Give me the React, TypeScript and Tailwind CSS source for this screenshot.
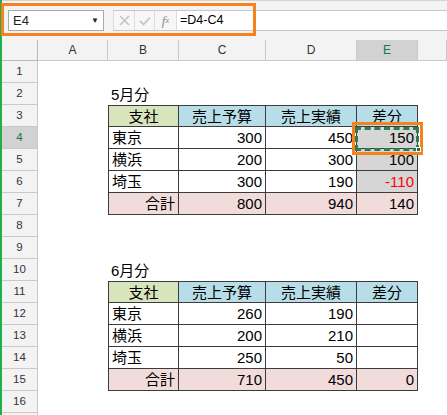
import type { ReactNode } from 'react';

const COLS = 'grid grid-cols-[36px_70px_71px_87px_91px_61px_1fr]';
const LETTERS = ['A', 'B', 'C', 'D', 'E', ''];

type Cell = {
  text?: string;
  align?: 'left' | 'right' | 'center';
  fill?: 'green' | 'blue' | 'pink' | 'sel';
  red?: boolean;
  active?: boolean;
};

const FILL: Record<string, string> = {
  green: 'bg-[#d8e4bc]',
  blue: 'bg-[#b7dee8]',
  pink: 'bg-[#f2dcdb]',
  sel: 'bg-[#d6d6d6]',
};

const head = (): Cell[] => [
  { text: '支社', align: 'center', fill: 'green' },
  { text: '売上予算', align: 'center', fill: 'blue' },
  { text: '売上実績', align: 'center', fill: 'blue' },
  { text: '差分', align: 'center', fill: 'blue' },
];

const r = (t: string): Cell => ({ text: t, align: 'right' });
const p = (t: string): Cell => ({ text: t, align: 'right', fill: 'pink' });

// B..E contents per row; `table` marks bordered rows, `top` the first one
const SHEET: Record<number, { cells: Cell[]; table?: boolean; top?: boolean }> = {
  2: { cells: [{ text: '5月分' }] },
  3: { cells: head(), table: true, top: true },
  4: {
    cells: [{ text: '東京' }, r('300'), r('450'), { text: '150', align: 'right', fill: 'sel', active: true }],
    table: true,
  },
  5: { cells: [{ text: '横浜' }, r('200'), r('300'), { text: '100', align: 'right', fill: 'sel' }], table: true },
  6: { cells: [{ text: '埼玉' }, r('300'), r('190'), { text: '-110', align: 'right', fill: 'sel', red: true }], table: true },
  7: { cells: [p('合計'), p('800'), p('940'), p('140')], table: true },
  10: { cells: [{ text: '6月分' }] },
  11: { cells: head(), table: true, top: true },
  12: { cells: [{ text: '東京' }, r('260'), r('190'), r('')], table: true },
  13: { cells: [{ text: '横浜' }, r('200'), r('210'), r('')], table: true },
  14: { cells: [{ text: '埼玉' }, r('250'), r('50'), r('')], table: true },
  15: { cells: [p('合計'), p('710'), p('450'), p('0')], table: true },
};

function XIcon() {
  return (
    <svg width="11" height="11" viewBox="0 0 11 11" className="text-[#c4c4c4]">
      <path d="M1 1 L10 10 M10 1 L1 10" stroke="currentColor" strokeWidth="1.6" />
    </svg>
  );
}

function CheckIcon() {
  return (
    <svg width="12" height="10" viewBox="0 0 12 10" className="text-[#c4c4c4]">
      <path d="M1 5 L4.5 8.5 L11 1.5" stroke="currentColor" strokeWidth="1.8" fill="none" />
    </svg>
  );
}

function Btn({ children, first }: { children: ReactNode; first?: boolean }) {
  return (
    <div
      className={`flex w-[20px] items-center justify-center ${first ? '' : 'border-l border-[#dcdcdc]'}`}
    >
      {children}
    </div>
  );
}

function FormulaBar() {
  return (
    <div className="flex h-[40px] border-t border-[#d4d4d4] bg-[#f3f3f3] pt-[9px]">
      <div className="flex h-[21px] w-full items-stretch">
        <div className="ml-[6px] flex w-[96px] items-center justify-between border border-[#a9a9a9] bg-white pl-[4px] pr-[4px] text-[13px] text-[#222]">
          <span>E4</span>
          <span className="text-[8px]">▼</span>
        </div>
        <div className="ml-[9px] flex flex-1 border-y border-[#c8c8c8]">
          <div className="flex border-l border-[#dcdcdc] bg-[#f7f7f7]">
            <Btn first>
              <XIcon />
            </Btn>
            <Btn>
              <CheckIcon />
            </Btn>
            <div className="flex w-[23px] items-center justify-center border-x border-[#dcdcdc] font-['Liberation_Serif',serif] text-[13px] italic text-[#8a8a8a]">
              f<span className="text-[9px]">x</span>
            </div>
          </div>
          <div className="flex flex-1 items-center bg-white pl-[3px] text-[12.5px] text-black">=D4-C4</div>
        </div>
      </div>
    </div>
  );
}

function Row({ n }: { n: number }) {
  const spec = SHEET[n];
  const header = (
    <div
      className={`flex h-[22px] items-center justify-center border-b border-r border-[#c9c9c9] text-[11.5px] ${
        n === 4 ? 'bg-[#d2d2d2] text-[#217346]' : 'bg-[#f3f3f3] text-[#333]'
      }`}
    >
      {n < 17 ? n : ''}
    </div>
  );
  const cells: ReactNode[] = [];
  for (let c = 0; c < 6; c++) {
    const cell = c >= 1 && c <= 4 ? spec?.cells[c - 1] : undefined;
    const border = spec?.table && c >= 1 && c <= 4;
    const cls = [
      'relative flex h-[22px] items-center px-[3px] whitespace-nowrap text-[15px] leading-none',
      cell?.align === 'right' ? 'justify-end' : cell?.align === 'center' ? 'justify-center' : 'justify-start',
      cell?.fill ? FILL[cell.fill] : 'bg-white',
      cell?.red ? 'text-[#ff0000]' : 'text-black',
      border ? 'border-b border-r border-[#3c3c3c]' : '',
      border && c === 1 ? 'border-l' : '',
      border && spec?.top ? 'border-t' : '',
      cell?.active ? 'z-10' : '',
    ].join(' ');
    cells.push(
      <div key={c} className={cls}>
        {cell?.text}
        {cell?.active && (
          <>
            <div className="absolute -bottom-[3px] -left-[2px] -right-[2px] top-[0px] border-[3px] border-dashed border-[#2d7d50]" />
            <div className="absolute -bottom-[4px] -right-[4px] h-[5px] w-[5px] border border-white bg-[#217346]" />
          </>
        )}
      </div>,
    );
  }
  return (
    <>
      {header}
      {cells}
    </>
  );
}

function Sheet() {
  return (
    <div className={COLS}>
      <div className="h-[21px] border-b border-r border-[#b8b8b8] bg-[#f3f3f3]" />
      {LETTERS.map((l, i) => (
        <div
          key={i}
          className={`flex h-[21px] items-center justify-center border-b border-r border-[#c9c9c9] text-[12px] ${
            l === 'E' ? 'bg-[#d2d2d2] text-[#217346]' : 'bg-[#f3f3f3] text-[#333]'
          }`}
        >
          {l}
        </div>
      ))}
      {Array.from({ length: 17 }, (_, i) => (
        <Row key={i + 1} n={i + 1} />
      ))}
    </div>
  );
}

export default function App() {
  return (
    <div className="relative flex h-[415px] w-[447px] overflow-hidden bg-white font-['Liberation_Sans','Noto_Sans_CJK_JP',sans-serif]">
      <div className="w-[2px] shrink-0 bg-[#1fb04a]" />
      <div className="min-w-0 flex-1">
        <FormulaBar />
        <Sheet />
      </div>
      {/* callout boxes */}
      <div className="pointer-events-none absolute left-[1px] top-[3px] h-[33px] w-[255px] border-[3px] border-[#f5821f]" />
      <div className="pointer-events-none absolute left-[352px] top-[122px] h-[33px] w-[71px] border-[3px] border-[#f5821f]" />
    </div>
  );
}
